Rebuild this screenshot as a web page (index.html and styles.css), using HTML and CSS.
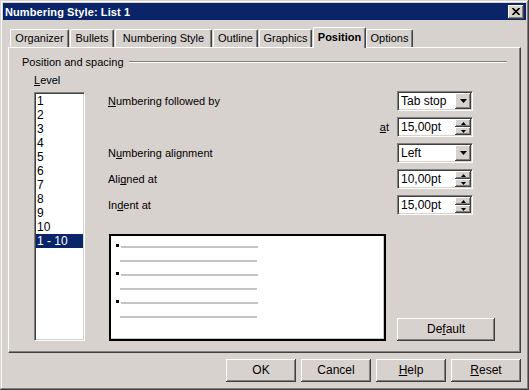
FILE: index.html
```html
<!DOCTYPE html>
<html>
<head>
<meta charset="utf-8">
<title>Numbering Style: List 1</title>
<link rel="stylesheet" href="styles.css">
</head>
<body>
<div class="window">
  <div class="titlebar">
    <span class="title">Numbering Style: List 1</span>
    <span class="close"><svg width="8" height="7" viewBox="0 0 8 7"><path d="M0.5 0 L7.5 7 M7.5 0 L0.5 7" stroke="#000" stroke-width="1.6" fill="none"/></svg></span>
  </div>
  <div class="tabs">
    <div class="tab t-org">Organizer</div>
    <div class="tab t-bul">Bullets</div>
    <div class="tab t-num">Numbering Style</div>
    <div class="tab t-out">Outline</div>
    <div class="tab t-gra">Graphics</div>
    <div class="tab t-pos active">Position</div>
    <div class="tab t-opt">Options</div>
  </div>
  <div class="panel">
    <div class="group-head"><span>Position and spacing</span><span class="groove"></span></div>
    <div class="body">
      <div class="levelcol">
        <div class="lbl"><u>L</u>evel</div>
        <div class="listbox">
          <div class="li">1</div>
          <div class="li">2</div>
          <div class="li">3</div>
          <div class="li">4</div>
          <div class="li">5</div>
          <div class="li">6</div>
          <div class="li">7</div>
          <div class="li">8</div>
          <div class="li">9</div>
          <div class="li">10</div>
          <div class="li sel">1 - 10</div>
        </div>
      </div>
      <div class="rightcol">
        <div class="row">
          <span class="rl"><u>N</u>umbering followed by</span>
          <div class="field"><span class="val">Tab stop</span><span class="ddbtn"><svg width="7" height="4" viewBox="0 0 7 4"><path d="M0 0 H7 L3.5 4 Z" fill="#000"/></svg></span></div>
        </div>
        <div class="row">
          <span class="rl at"><u>a</u>t</span>
          <div class="field"><span class="val">15,00pt</span><span class="spin"><span class="sb"><svg width="5" height="3" viewBox="0 0 5 3"><path d="M2.5 0 L5 3 H0 Z" fill="#000"/></svg></span><span class="sb"><svg width="5" height="3" viewBox="0 0 5 3"><path d="M0 0 H5 L2.5 3 Z" fill="#000"/></svg></span></span></div>
        </div>
        <div class="row">
          <span class="rl">N<u>u</u>mbering alignment</span>
          <div class="field"><span class="val">Left</span><span class="ddbtn"><svg width="7" height="4" viewBox="0 0 7 4"><path d="M0 0 H7 L3.5 4 Z" fill="#000"/></svg></span></div>
        </div>
        <div class="row">
          <span class="rl">Ali<u>g</u>ned at</span>
          <div class="field"><span class="val">10,00pt</span><span class="spin"><span class="sb"><svg width="5" height="3" viewBox="0 0 5 3"><path d="M2.5 0 L5 3 H0 Z" fill="#000"/></svg></span><span class="sb"><svg width="5" height="3" viewBox="0 0 5 3"><path d="M0 0 H5 L2.5 3 Z" fill="#000"/></svg></span></span></div>
        </div>
        <div class="row">
          <span class="rl">In<u>d</u>ent at</span>
          <div class="field"><span class="val">15,00pt</span><span class="spin"><span class="sb"><svg width="5" height="3" viewBox="0 0 5 3"><path d="M2.5 0 L5 3 H0 Z" fill="#000"/></svg></span><span class="sb"><svg width="5" height="3" viewBox="0 0 5 3"><path d="M0 0 H5 L2.5 3 Z" fill="#000"/></svg></span></span></div>
        </div>
        <div class="bottom">
          <div class="preview">
            <div class="pv-row"><span class="bullet"></span><span class="pline first"></span></div>
            <div class="pv-row"><span class="pline second"></span></div>
            <div class="pv-row"><span class="bullet"></span><span class="pline first"></span></div>
            <div class="pv-row"><span class="pline second"></span></div>
            <div class="pv-row"><span class="bullet"></span><span class="pline first"></span></div>
            <div class="pv-row"><span class="pline second"></span></div>
          </div>
          <div class="btn default">De<u>f</u>ault</div>
        </div>
      </div>
    </div>
  </div>
  <div class="footer">
    <div class="btn">OK</div>
    <div class="btn">Cancel</div>
    <div class="btn"><u>H</u>elp</div>
    <div class="btn"><u>R</u>eset</div>
  </div>
</div>
</body>
</html>
```

FILE: styles.css
```css
* { box-sizing: border-box; }
html, body { margin: 0; padding: 0; background: #d8d2ce; }
body { font-family: "Liberation Sans", Arial, sans-serif; font-size: 11px; color: #000; }
u { text-decoration: underline; text-underline-offset: 1px; text-decoration-skip-ink: none; }

.window {
  width: 529px;
  height: 390px;
  padding: 3px;
  background: #d8d2ce;
  box-shadow: inset -1px -1px #404040, inset 1px 1px #d8d2ce, inset -2px -2px #808080, inset 2px 2px #ffffff;
  display: flex;
  flex-direction: column;
}

.titlebar {
  height: 17px;
  background: #0a246a;
  display: flex;
  align-items: center;
  justify-content: space-between;
  padding: 0 2px 0 2px;
}
.title { color: #fff; font-weight: bold; font-size: 11px; letter-spacing: 0.1px; }
.close {
  width: 16px;
  height: 14px;
  background: #d8d2ce;
  display: flex;
  align-items: center;
  justify-content: center;
  box-shadow: inset -1px -1px #404040, inset 1px 1px #ffffff, inset -2px -2px #808080;
}

.tabs {
  display: flex;
  align-items: flex-end;
  height: 20px;
  margin-top: 7px;
  padding-left: 7px;
  gap: 1px;
  position: relative;
  z-index: 1;
}
.tab {
  height: 18px;
  line-height: 17px;
  text-align: center;
  border-top: 1px solid #fff;
  border-left: 1px solid #fff;
  border-right: 1px solid #404040;
  border-radius: 2px 2px 0 0;
  box-shadow: inset -1px 0 #808080;
  background: #d8d2ce;
}
.tab.active {
  height: 21px;
  line-height: 19px;
  font-weight: bold;
  margin-bottom: -1px;
}
.t-org { width: 59px; }
.t-bul { width: 44px; }
.t-num { width: 97px; }
.t-out { width: 45px; }
.t-gra { width: 53px; }
.t-pos { width: 53px; }
.t-opt { width: 47px; margin-left: -1px; }

.panel {
  width: 513px;
  height: 306px;
  margin-left: 5px;
  border-top: 1px solid #fff;
  border-left: 1px solid #fff;
  border-right: 1px solid #404040;
  border-bottom: 1px solid #404040;
  box-shadow: inset -1px -1px #808080;
  padding: 7px 13px 0 13px;
  display: flex;
  flex-direction: column;
}

.group-head {
  display: flex;
  align-items: center;
  height: 14px;
  line-height: 14px;
}
.groove {
  flex: 1;
  height: 2px;
  margin-left: 5px;
  border-top: 1px solid #808080;
  border-bottom: 1px solid #fff;
}

.body { display: flex; }
.levelcol { margin-left: 12px; width: 51px; display: flex; flex-direction: column; }
.lbl { margin-top: 4px; height: 14px; line-height: 14px; }
.listbox {
  margin-top: 5px;
  height: 249px;
  background: #fff;
  border-top: 1px solid #808080;
  border-left: 1px solid #808080;
  border-right: 1px solid #fff;
  border-bottom: 1px solid #fff;
  box-shadow: inset 1px 1px #404040, inset -1px -1px #d8d2ce;
  padding: 1px 1px 0 1px;
}
.li { height: 14px; line-height: 14px; padding-left: 1px; font-size: 12px; }
.li.sel { background: #0a246a; color: #fff; }

.rightcol {
  flex: 1;
  margin-left: 23px;
  padding-top: 22px;
  display: flex;
  flex-direction: column;
  gap: 6px;
}
.row { display: flex; align-items: center; height: 20px; }
.rl { flex: 1; }
.rl.at { text-align: right; padding-right: 8px; }
.field {
  width: 76px;
  height: 20px;
  margin-right: 34px;
  background: #fff;
  border-top: 1px solid #808080;
  border-left: 1px solid #808080;
  border-right: 1px solid #fff;
  border-bottom: 1px solid #fff;
  box-shadow: inset 1px 1px #404040, inset -1px -1px #d8d2ce;
  padding: 1px;
  display: flex;
  align-items: stretch;
}
.val { flex: 1; padding-left: 2px; line-height: 16px; font-size: 12px; }
.ddbtn {
  width: 16px;
  background: #d8d2ce;
  box-shadow: inset -1px -1px #404040, inset 1px 1px #ffffff, inset -2px -2px #808080;
  display: flex;
  align-items: center;
  justify-content: center;
}
.spin { width: 16px; display: flex; flex-direction: column; }
.sb {
  flex: 1;
  background: #d8d2ce;
  box-shadow: inset -1px -1px #404040, inset 1px 1px #ffffff, inset -2px -2px #808080;
  display: flex;
  align-items: center;
  justify-content: center;
}
.sb svg { display: block; }

.bottom { display: flex; margin-top: 13px; }
.preview {
  width: 277px;
  height: 107px;
  margin-left: 1px;
  background: #fff;
  border: 2px solid #000;
  box-shadow: inset -1px -1px #c8c8c8;
  padding: 8px 0 0 5px;
}
.pv-row { height: 14px; display: flex; align-items: flex-start; }
.bullet { width: 3px; height: 3px; background: #000; }
.pline { height: 2px; background: #c4c4c4; width: 137px; }
.pline.first { margin-left: 2px; margin-top: 2px; }
.pline.second { margin-left: 4px; margin-top: 2px; }

.btn {
  width: 70px;
  height: 23px;
  line-height: 22px;
  text-align: center;
  background: #d8d2ce;
  box-shadow: inset -1px -1px #404040, inset 1px 1px #ffffff, inset -2px -2px #808080;
  font-size: 12px;
}
.btn.default { width: 98px; margin-left: 11px; align-self: flex-end; }

.footer {
  display: flex;
  justify-content: flex-end;
  gap: 5px;
  margin-top: 6px;
  padding-right: 5px;
}
```
